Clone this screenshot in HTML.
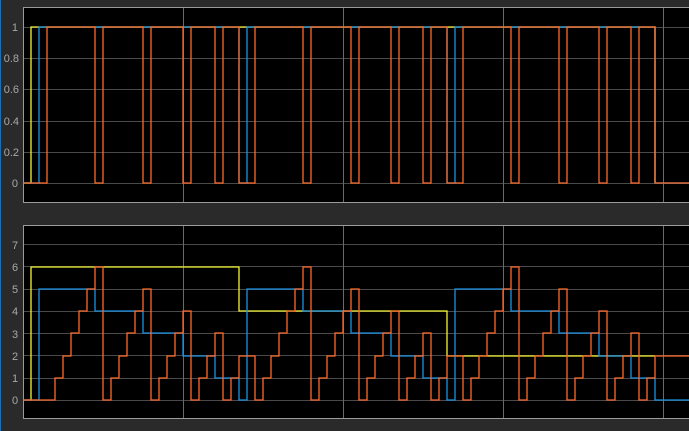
<!DOCTYPE html>
<html><head><style>
html,body{margin:0;padding:0;background:#2a2a2a;}
svg{display:block;}
text{font-family:"Liberation Sans",sans-serif;font-size:11px;fill:#a8a8a8;}
</style></head><body>
<svg width="689" height="431" viewBox="0 0 689 431" xmlns="http://www.w3.org/2000/svg">
<rect width="689" height="431" fill="#2a2a2a"/>
<rect x="0" y="0" width="1" height="431" fill="#1c6fb5"/>
<!-- top axes -->
<rect x="23.5" y="7.5" width="670" height="195" fill="#000" stroke="#9a9a9a" stroke-width="1"/>
<g stroke="#4a4a4a" stroke-width="1">
<path d="M24 27.5H689M24 58.5H689M24 89.5H689M24 121.5H689M24 152.5H689M24 183.5H689"/>
</g>
<g stroke="#6a6a6a" stroke-width="1">
<path d="M183.5 8V202M343.5 8V202M503.5 8V202M663.5 8V202"/>
</g>
<g fill="none" stroke-width="1.3">
<path stroke="#f5f532" d="M23 183 H31 V27 H655 V183"/>
<path stroke="#1a93e6" d="M23 183 H39 V27 H239 V183 H247 V27 H447 V183 H455 V27 H655 V183 H690"/>
<path stroke="#ff6a2a" d="M23 183 H47 V27 H95 V183 H103 V27 H143 V183 H151 V27 H183 V183 H191 V27 H215 V183 H223 V27 H239 V183 H255 V27 H303 V183 H311 V27 H351 V183 H359 V27 H391 V183 H399 V27 H423 V183 H431 V27 H447 V183 H463 V27 H511 V183 H519 V27 H559 V183 H567 V27 H599 V183 H607 V27 H631 V183 H639 V27 H655 V183 H690"/>
</g>
<g text-anchor="end">
<text x="18" y="31">1</text>
<text x="19" y="62">0.8</text>
<text x="19" y="93">0.6</text>
<text x="19" y="125">0.4</text>
<text x="19" y="156">0.2</text>
<text x="18" y="187">0</text>
</g>
<!-- bottom axes -->
<rect x="23.5" y="225.5" width="670" height="193" fill="#000" stroke="#9a9a9a" stroke-width="1"/>
<g stroke="#4a4a4a" stroke-width="1">
<path d="M24 244.5H689M24 266.5H689M24 289.5H689M24 311.5H689M24 333.5H689M24 355.5H689M24 378.5H689M24 400.5H689"/>
</g>
<g stroke="#6a6a6a" stroke-width="1">
<path d="M183.5 226V418M343.5 226V418M503.5 226V418M663.5 226V418"/>
</g>
<g fill="none" stroke-width="1.3">
<path stroke="#f5f532" d="M23 400 H31 V267 H239 V311 H447 V356 H655"/>
<path stroke="#1a93e6" d="M23 400 H39 V289 H95 V311 H143 V333 H183 V356 H215 V378 H239 V400 H247 V289 H303 V311 H351 V333 H391 V356 H423 V378 H447 V400 H455 V289 H511 V311 H559 V333 H599 V356 H631 V378 H655 V400 H690"/>
<path stroke="#ff6a2a" d="M23 400 H55 V378 H63 V356 H71 V333 H79 V311 H87 V289 H95 V267 H103 V400 H111 V378 H119 V356 H127 V333 H135 V311 H143 V289 H151 V400 H159 V378 H167 V356 H175 V333 H183 V311 H191 V400 H199 V378 H207 V356 H215 V333 H223 V400 H231 V378 H239 V356 H255 V400 H263 V378 H271 V356 H279 V333 H287 V311 H295 V289 H303 V267 H311 V400 H319 V378 H327 V356 H335 V333 H343 V311 H351 V289 H359 V400 H367 V378 H375 V356 H383 V333 H391 V311 H399 V400 H407 V378 H415 V356 H423 V333 H431 V400 H439 V378 H447 V356 H463 V400 H471 V378 H479 V356 H487 V333 H495 V311 H503 V289 H511 V267 H519 V400 H527 V378 H535 V356 H543 V333 H551 V311 H559 V289 H567 V400 H575 V378 H583 V356 H591 V333 H599 V311 H607 V400 H615 V378 H623 V356 H631 V333 H639 V400 H647 V378 H655 V356 H690"/>
</g>
<g text-anchor="middle">
<text x="15" y="249">7</text>
<text x="15" y="271">6</text>
<text x="15" y="293">5</text>
<text x="15" y="315">4</text>
<text x="15" y="338">3</text>
<text x="15" y="360">2</text>
<text x="15" y="382">1</text>
<text x="15" y="404">0</text>
</g>
</svg>
</body></html>
